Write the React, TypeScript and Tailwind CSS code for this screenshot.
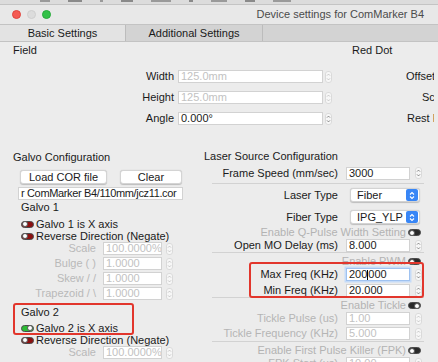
function Stepper({ dim = false }: { dim?: boolean }) {
  return (
    <svg width="7" height="12" viewBox="0 0 7 12" className="shrink-0">
      <rect x="0.5" y="0.5" width="6" height="11" rx="2.5" fill="#f7f7f7" stroke="#dadada" />
      <path
        d="M2 4.6 L3.5 3.1 L5 4.6 M2 7.4 L3.5 8.9 L5 7.4"
        fill="none"
        stroke={dim ? '#c0c0c0' : '#777'}
        strokeWidth="0.9"
      />
    </svg>
  );
}

function Input({
  value,
  width,
  dim = false,
  focus = false,
  extra = '',
}: {
  value: React.ReactNode;
  width: string;
  dim?: boolean;
  focus?: boolean;
  extra?: string;
}) {
  return (
    <div
      className={`${width} h-[13px] bg-white border flex items-center pl-[2px] leading-none whitespace-nowrap overflow-hidden ${
        focus ? 'border-[#9fc2f0] shadow-[0_0_0_1.5px_#c5dbf8]' : 'border-[#d2d2d2]'
      } ${dim ? 'text-[#c2c2c2]' : 'text-[#1b1b1b]'} ${extra}`}
    >
      {value}
    </div>
  );
}

function Toggle({ kind }: { kind: 'red' | 'green' | 'darkL' | 'darkR' }) {
  const knobLeft = kind === 'red' || kind === 'darkL';
  const fill =
    kind === 'red' ? 'bg-[#8c1010]' : kind === 'green' ? 'bg-[#2dbb35]' : 'bg-[#2a2a2a]';
  return (
    <div
      className={`w-[13px] h-[7px] rounded-full border border-[#4a4a4a] flex items-center shrink-0 ${fill} ${
        knobLeft ? 'justify-start' : 'justify-end'
      }`}
    >
      <div className="w-[6px] h-[6px] rounded-full bg-white border border-[#555]" />
    </div>
  );
}

function Select({ value }: { value: string }) {
  return (
    <div className="ml-[12px] w-[70px] h-[14px] bg-white rounded-[3px] border border-[#d3d3d3] shadow-[0_0.5px_1px_rgba(0,0,0,0.2)] flex items-center">
      <span className="flex-1 pl-[6px] leading-none">{value}</span>
      <div className="w-[12px] h-[12px] mr-px bg-[#3886f6] rounded-[2px] flex items-center justify-center">
        <svg width="6" height="9" viewBox="0 0 6 9">
          <path d="M1 3.5 L3 1.5 L5 3.5 M1 5.5 L3 7.5 L5 5.5" fill="none" stroke="#fff" strokeWidth="1.1" />
        </svg>
      </div>
    </div>
  );
}

function TopRow({ label, value, dim, right, rightCls }: { label: string; value: string; dim?: boolean; right: string; rightCls: string }) {
  return (
    <div className="flex items-center h-[21px] whitespace-nowrap">
      <span className="w-[174px] text-right">{label}</span>
      <div className="ml-[4px]">
        <Input value={value} width="w-[145px]" dim={dim} />
      </div>
      <div className="ml-[2px]">
        <Stepper dim={dim} />
      </div>
      <span className={`overflow-hidden ${rightCls}`}>{right}</span>
    </div>
  );
}

function GalvoRow({ label, value, dim = true, className = '' }: { label: string; value: string; dim?: boolean; className?: string }) {
  return (
    <div className={`flex items-center h-[13px] whitespace-nowrap ${className}`}>
      <span className={`ml-[21px] w-[75px] text-right ${dim ? 'text-[#b9b9b9]' : ''}`}>{label}</span>
      <div className="ml-[7px]">
        <Input value={value} width="w-[59px]" dim={dim} />
      </div>
      <div className="ml-[4px]">
        <Stepper dim={dim} />
      </div>
    </div>
  );
}

function ToggleRow({ label, kind, className = '' }: { label: string; kind: 'red' | 'green'; className?: string }) {
  return (
    <div className={`flex items-center h-[12px] ml-[21px] gap-[2px] whitespace-nowrap ${className}`}>
      <Toggle kind={kind} />
      <span>{label}</span>
    </div>
  );
}

function RRow({
  label,
  value,
  dim = false,
  focus = false,
  className = '',
}: {
  label: string;
  value: React.ReactNode;
  dim?: boolean;
  focus?: boolean;
  className?: string;
}) {
  return (
    <div className={`flex items-center h-[13px] whitespace-nowrap ${className}`}>
      <span className={`w-[148px] text-right ${dim ? 'text-[#b5b5b5]' : ''}`}>{label}</span>
      <div className="ml-[8px]">
        <Input value={value} width="w-[64px]" dim={dim} focus={focus} />
      </div>
      <div className="ml-[5px]">
        <Stepper dim={dim} />
      </div>
    </div>
  );
}

function EnableRow({ label, kind, className = '' }: { label: string; kind: 'darkL' | 'darkR'; className?: string }) {
  return (
    <div className={`flex items-center justify-end h-[13px] pr-[17px] gap-[2px] whitespace-nowrap ${className}`}>
      <span className="text-[#b3b3b3]">{label}</span>
      <Toggle kind={kind} />
    </div>
  );
}

export default function App() {
  return (
    <div className="relative w-[438px] h-[362px] overflow-hidden bg-[#ececec] text-[11px] text-[#1a1a1a] font-['Liberation_Sans','Helvetica',sans-serif]">
      {/* clipped toolbar above the window */}
      <div className="h-[5px] bg-[#dcdcdc] border-b border-[#c4c4c4] flex items-start gap-[18px] pl-[40px] overflow-hidden">
        <div className="w-[10px] h-[2px] bg-[#9a9a9a]" />
        <div className="w-[14px] h-[2px] bg-[#8a8a8a]" />
        <div className="w-[3px] h-[2px] bg-[#9a9a9a]" />
        <div className="w-[12px] h-[2px] bg-[#8a8a8a]" />
        <div className="w-[20px] h-[2px] bg-[#9a9a9a]" />
        <div className="w-[4px] h-[2px] bg-[#8a8a8a]" />
        <div className="w-[16px] h-[2px] bg-[#9a9a9a]" />
        <div className="w-[10px] h-[2px] bg-[#8a8a8a]" />
        <div className="w-[18px] h-[2px] bg-[#9a9a9a]" />
      </div>

      {/* title bar */}
      <div className="h-[19px] bg-[#e8e8e8] flex items-center justify-between pl-[12px] pr-[14px]">
        <div className="flex items-center gap-[6px]">
          <div className="w-[9px] h-[9px] rounded-full bg-[#f45b53] border border-[#e0443e]" />
          <div className="w-[9px] h-[9px] rounded-full bg-[#dcdcdc] border border-[#cfcfcf]" />
          <div className="w-[9px] h-[9px] rounded-full bg-[#33c148] border border-[#27aa3a]" />
        </div>
        <span className="text-[#4b4b4b]">Device settings for ComMarker B4</span>
      </div>

      {/* tabs */}
      <div className="h-[18px] flex border-y border-[#c3c3c3] bg-[#d3d3d3]">
        <div className="w-[126px] bg-[#e3e3e3] border-r border-[#bcbcbc] flex items-center justify-center">
          Basic Settings
        </div>
        <div className="w-[137px] border-r border-[#bcbcbc] flex items-center justify-center">
          Additional Settings
        </div>
      </div>

      {/* field */}
      <div className="flex items-center h-[14px] mt-px whitespace-nowrap">
        <span className="ml-[13px] w-[339px]">Field</span>
        <span>Red Dot</span>
      </div>
      <div className="mt-[9px]">
        <TopRow label="Width" value="125.0mm" dim right="Offset" rightCls="ml-[74px] w-[28px]" />
        <TopRow label="Height" value="125.0mm" dim right="Scale" rightCls="ml-[90px] w-[12px]" />
        <TopRow label="Angle" value="0.000°" right="Rest Position" rightCls="ml-[75px] w-[27px]" />
      </div>

      <div className="flex mt-[21px]">
        {/* galvo */}
        <div className="w-[190px] flex flex-col">
          <div className="h-[14px] ml-[13px] flex items-center">Galvo Configuration</div>
          <div className="mt-[6px] h-[14px] flex">
            <div className="ml-[20px] w-[87px] bg-white rounded-[3px] border border-[#d4d4d4] shadow-[0_0.5px_1px_rgba(0,0,0,0.2)] flex items-center justify-center">
              Load COR file
            </div>
            <div className="ml-[13px] w-[62px] bg-white rounded-[3px] border border-[#d4d4d4] shadow-[0_0.5px_1px_rgba(0,0,0,0.2)] flex items-center justify-center">
              Clear
            </div>
          </div>
          <div className="mt-[3px] ml-[18px]">
            <Input value="r ComMarker B4/110mm/jcz11.cor" width="w-[165px]" extra="tracking-[-0.35px]" />
          </div>
          <div className="mt-px h-[12px] ml-[21px] flex items-center">Galvo 1</div>
          <ToggleRow label="Galvo 1 is X axis" kind="red" className="mt-[5px]" />
          <ToggleRow label="Reverse Direction (Negate)" kind="red" />
          <GalvoRow label="Scale" value="100.0000%" />
          <GalvoRow label="Bulge (  )" value="1.0000" className="mt-[2px]" />
          <GalvoRow label="Skew / /" value="1.0000" className="mt-[2px]" />
          <GalvoRow label="Trapezoid / \" value="1.0000" className="mt-[2px]" />
          <div className="mt-[6px] h-[12px] ml-[21px] flex items-center">Galvo 2</div>
          <ToggleRow label="Galvo 2 is X axis" kind="green" className="mt-[4px]" />
          <ToggleRow label="Reverse Direction (Negate)" kind="red" />
          <GalvoRow label="Scale" value="100.0000%" />
        </div>

        {/* laser source */}
        <div className="flex-1 flex flex-col">
          <div className="h-[13px] ml-[14px] flex items-center">Laser Source Configuration</div>
          <RRow label="Frame Speed (mm/sec)" value="3000" className="mt-[3px] h-[14px]" />
          <div className="mt-[3px] ml-[22px] mr-[14px] h-px bg-[#d2d2d2]" />
          <div className="mt-[4px] h-[14px] flex items-center">
            <span className="w-[148px] text-right">Laser Type</span>
            <Select value="Fiber" />
          </div>
          <div className="mt-[8px] h-[14px] flex items-center">
            <span className="w-[148px] text-right">Fiber Type</span>
            <Select value="IPG_YLP" />
          </div>
          <EnableRow label="Enable Q-Pulse Width Setting" kind="darkL" className="mt-[2px]" />
          <RRow label="Open MO Delay (ms)" value="8.000" />
          <div className="ml-[22px] mr-[14px] h-px bg-[#d2d2d2]" />
          <EnableRow label="Enable PWM" kind="darkL" className="mt-[2px]" />
          <RRow
            label="Max Freq (KHz)"
            value={
              <>
                200<span className="inline-block w-px h-[10px] bg-black" />000
              </>
            }
            focus
          />
          <RRow label="Min Freq (KHz)" value="20.000" className="mt-[3px]" />
          <div className="ml-[22px] mr-[14px] h-px bg-[#d2d2d2]" />
          <EnableRow label="Enable Tickle" kind="darkR" className="mt-px" />
          <RRow label="Tickle Pulse (us)" value="1.00" dim />
          <RRow label="Tickle Frequency (KHz)" value="5.000" dim className="mt-[2px]" />
          <div className="mt-px ml-[22px] mr-[14px] h-px bg-[#d2d2d2]" />
          <EnableRow label="Enable First Pulse Killer (FPK)" kind="darkL" className="mt-[2px]" />
          <RRow label="FPK Start (us)" value="10.00" dim />
        </div>
      </div>

      {/* red annotation boxes */}
      <div className="absolute left-[13px] top-[303px] w-[121px] h-[32px] border-2 border-[#e2362c] rounded-[3px]" />
      <div className="absolute left-[249px] top-[262px] w-[175px] h-[36px] border-2 border-[#e2362c] rounded-[3px]" />
    </div>
  );
}
